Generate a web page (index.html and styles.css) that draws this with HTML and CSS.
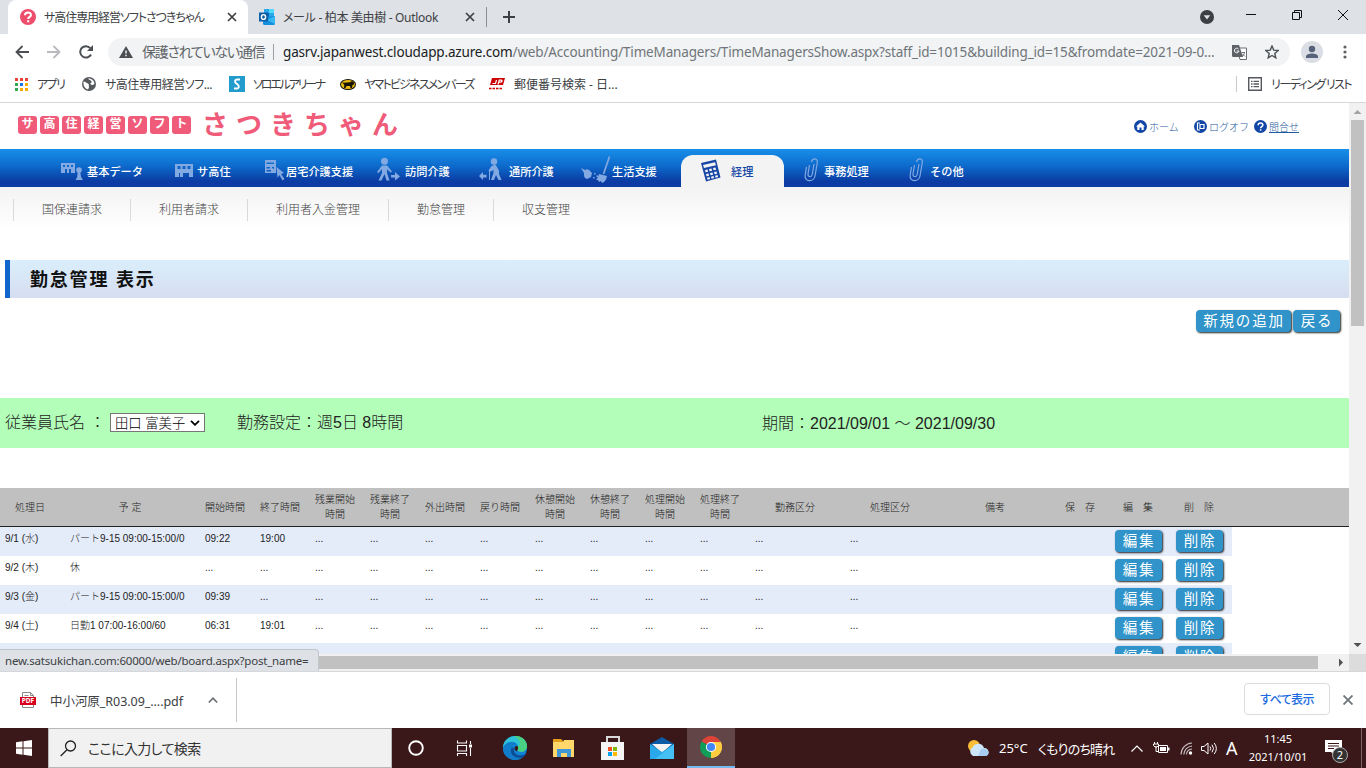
FILE: index.html
```html
<!DOCTYPE html>
<html lang="ja">

<head>
    <meta charset="UTF-8" />
    <meta name="viewport" content="width=device-width, initial-scale=1.0" />
    <title>サ高住専用経営ソフトさつきちゃん</title>
    <link rel="stylesheet" href="styles.css">
</head>

<body>

    <!-- Tabs -->
    <div class="tabstrip">
        <div class="tab active">
            <svg class="favicon" width="16" height="16" viewBox="0 0 16 16"><circle cx="8" cy="8" r="8" fill="#ee4d6c" /><path d="M5 6.2C5 2.6 11 2.6 11 6c0 2-2.8 1.9-2.8 4M8.200 11.300v2" fill="none" stroke="#fff" stroke-width="2" /></svg>
            <span class="tab-title title-main">サ高住専用経営ソフトさつきちゃん</span>
            <svg class="tab-close" width="10" height="10" viewBox="0 0 10 10"><path d="M1 1l8 8M9 1l-8 8" stroke="#3c4043" stroke-width="1.700" /></svg>
        </div>
        <div class="tab">
            <svg class="favicon" width="16" height="16" viewBox="0 0 16 16"><path d="M5 0h10v8H5z" fill="#28a8ea" /><path d="M10 0h5v4h-5z" fill="#50d9ff" /><path d="M5 4h5v4H5z" fill="#0364b8" /><path d="M4 8l12-1v7.500a1.500 1.500 0 0 1-1.500 1.500h-9A1.500 1.500 0 0 1 4 14.500z" fill="#1490df" /><path d="M16 7v8l-8-4z" fill="#35b8f1" /><path d="M0 3.500h9v9H0z" fill="#0f5ea8" /><ellipse cx="4.500" cy="8" rx="2.100" ry="2.400" fill="none" stroke="#fff" stroke-width="1.400" /></svg>
            <span class="tab-title title-mail">メール - 柏本 美由樹 - Outlook</span>
            <svg class="tab-close" width="10" height="10" viewBox="0 0 10 10"><path d="M1 1l8 8M9 1l-8 8" stroke="#3c4043" stroke-width="1.700" /></svg>
        </div>
        <svg class="new-tab" width="12" height="12" viewBox="0 0 12 12"><path d="M6 0v12M0 6h12" stroke="#3c4043" stroke-width="2" /></svg>
        <div class="window-buttons">
            <svg width="14" height="14" viewBox="0 0 14 14"><circle cx="7" cy="7" r="7" fill="#3c4043" /><path d="M3.700 5.200h6.600L7 9.600z" fill="#dee1e6" /></svg>
            <svg width="10" height="10" viewBox="0 0 10 10"><path d="M0 4.500h10" stroke="#111" /></svg>
            <svg width="10" height="10" viewBox="0 0 10 10"><path d="M.5 2.500h7v7h-7zM2.500 2.500v-2h7v7h-2" fill="none" stroke="#111" /></svg>
            <svg width="10" height="10" viewBox="0 0 10 10"><path d="M0 0l10 10M10 0L0 10" stroke="#111" /></svg>
        </div>
    </div>

    <!-- Address bar -->
    <div class="toolbar">
        <svg width="14" height="14" viewBox="0 0 14 14"><path d="M14 7H1.500M7.500 1l-6 6 6 6" fill="none" stroke="#4b4f54" stroke-width="1.800" /></svg>
        <svg width="14" height="14" viewBox="0 0 14 14"><path d="M0 7h12.500M6.500 1l6 6-6 6" fill="none" stroke="#b8babd" stroke-width="1.800" /></svg>
        <svg width="14" height="14" viewBox="0 0 14 14"><path d="M12 9.500A5.700 5.700 0 1 1 11.300 3.200" fill="none" stroke="#4b4f54" stroke-width="2" /><path d="M14 0v6H8z" fill="#4b4f54" /></svg>
        <div class="omnibox">
            <svg width="14" height="12" viewBox="0 0 14 12"><path d="M7 0l7 12H0z" fill="#4b4f54" /><path d="M7 4.500v3M7 8.700v1.500" stroke="#f1f3f4" stroke-width="1.500" /></svg>
            <span class="insecure">保護されていない通信</span>
            <span class="url"><b>gasrv.japanwest.cloudapp.azure.com</b>/web/Accounting/TimeManagers/TimeManagersShow.aspx?staff_id=1015&amp;building_id=15&amp;fromdate=2021-09-0...</span>
            <svg class="translate" width="15" height="15" viewBox="0 0 15 15"><path d="M5 3h9.500v11.500H8z" fill="#fff" stroke="#6a6e72" /><path d="M0 0h7l4 12H1.200A1.200 1.200 0 0 1 0 10.800z" fill="#5f6368" /><path d="M6.500 4A2.300 2.300 0 1 0 7 6H4.700" fill="none" stroke="#fff" stroke-width="1" /><path d="M9.500 7.500H13M12.500 7.500c-.3 2-1.300 3-2.500 4M10.500 9l2.500 2.500" fill="none" stroke="#5f6368" stroke-width=".9" /></svg>
            <svg class="star" width="14" height="14" viewBox="0 0 14 14"><path d="M7 1l1.700 4.100 4.500.4-3.400 2.900 1 4.400L7 10.500l-3.800 2.300 1-4.400L.8 5.500l4.500-.4z" fill="none" stroke="#4b4f54" stroke-width="1.400" /></svg>
        </div>
        <svg class="avatar" width="22" height="22" viewBox="0 0 22 22"><circle cx="11" cy="11" r="11" fill="#dadee4" /><circle cx="11" cy="8" r="3.200" fill="#56617a" /><path d="M5 17v-1.500c0-4 12-4 12 0V17z" fill="#56617a" /></svg>
        <svg class="menu-dots" width="4" height="14" viewBox="0 0 4 14"><g fill="#5f6368"><circle cx="2" cy="2" r="1.600" /><circle cx="2" cy="7" r="1.600" /><circle cx="2" cy="12" r="1.600" /></g></svg>
    </div>

    <!-- Bookmarks -->
    <div class="bookmarks">
        <a class="bm bm-apps"><svg width="13" height="13" viewBox="0 0 13 13"><path d="M0 0h3v3H0zM5 0h3v3H5zM10 0h3v3h-3z" fill="#ea4335" /><path d="M0 5h3v3H0z" fill="#34a853" /><path d="M5 5h3v3H5z" fill="#1a73e8" /><path d="M10 5h3v3h-3zM5 10h3v3H5zM10 10h3v3h-3z" fill="#f9ab00" /><path d="M0 10h3v3H0z" fill="#34a853" /></svg>アプリ</a>
        <a class="bm bm-satsuki"><svg width="14" height="14" viewBox="0 0 14 14"><circle cx="7" cy="7" r="7" fill="#55595e" /><path d="M1.500 4.500c2 0 2.500 1.500 4.500 2 1.500.5.500 2.500 1 4l-1 2C3 11.500 1 9 1.500 4.500zM6 1.500c1 2 3 1 3.500 3S7 6 9 7.500s2.500-.5 3.500-.5C12.500 4 10 1.300 6 1.500z" fill="#fff" /></svg>サ高住専用経営ソフ...</a>
        <a class="bm bm-soloel"><svg width="16" height="16" viewBox="0 0 16 16"><path d="M0 0h16v16H0z" fill="#229ccc" /><path d="M11 3.500H8.300C5.500 3.500 5.500 6 7 7.200l2 1.600c1.500 1.500.8 3.700-1.200 3.700H5" fill="none" stroke="#fff" stroke-width="1.900" /></svg>ソロエルアリーナ</a>
        <a class="bm bm-yamato"><svg width="16" height="11" viewBox="0 0 16 11"><ellipse cx="8" cy="5.500" rx="8" ry="5.500" fill="#151308" /><ellipse cx="8" cy="5.500" rx="7" ry="4.500" fill="#e8b914" /><path d="M2 3l2 .8 6-.6L12 2l2 1.500v2L12.500 6 12 9h-1.500L10 7H6.500L5.500 9H4l.3-3z" fill="#151308" /></svg>ヤマトビジネスメンバーズ</a>
        <a class="bm bm-post"><svg width="16" height="12" viewBox="0 0 16 12"><path d="M3 0h13l-2 7H1z" fill="#c00" /><path d="M7.500 2L6.500 5.500H3.500M9 6.500l1.300-4.300h2.200c1 0 .6 2-.6 2H9.700" fill="none" stroke="#fff" stroke-width="1.200" /><path d="M0 10.500h14" stroke="#c00" stroke-width="1.500" stroke-dasharray="2.500 1" /></svg>郵便番号検索 - 日...</a>
        <a class="bm bm-reading"><svg width="14" height="14" viewBox="0 0 14 14"><path d="M.7.7h12.600v12.600H.7z" fill="none" stroke="#55595e" stroke-width="1.400" /><path d="M3 4.300h1.500M3 7h1.500M3 9.700h1.500M5.500 4.300H11M5.500 7H11M5.500 9.700H11" stroke="#55595e" stroke-width="1.300" /></svg>リーディング リスト</a>
    </div>

    <div class="viewport">
        <div class="page">
            <!-- Site header -->
            <div class="header">
                <div class="badges">
                    <span>サ</span><span>高</span><span>住</span><span>経</span><span>営</span><span>ソ</span><span>フ</span><span>ト</span>
                </div>
                <div class="logo">さつきちゃん</div>
                <div class="header-links">
                    <a class="link-home"><svg width="13" height="13" viewBox="0 0 13 13"><circle cx="6.500" cy="6.500" r="6.500" fill="#1146a6" /><path d="M6.500 2.500L2 6.500h1.300V10h2.200V7.500h2V10h2.200V6.500H11z" fill="#fff" /></svg>ホーム</a>
                    <a class="link-logoff"><svg width="13" height="13" viewBox="0 0 13 13"><circle cx="6.500" cy="6.500" r="6.500" fill="#1146a6" /><path d="M6 3H3.500v7H6M6 4.500h4v4H6z" fill="none" stroke="#fff" stroke-width="1.200" /></svg>ログオフ</a>
                    <a class="link-contact"><svg width="13" height="13" viewBox="0 0 13 13"><circle cx="6.500" cy="6.500" r="6.500" fill="#1146a6" /><path d="M4.200 5.200c0-2.800 4.600-2.800 4.600 0 0 1.500-2.200 1.300-2.200 3M6.600 9.200v1.500" fill="none" stroke="#fff" stroke-width="1.500" /></svg><u>問合せ</u></a>
                </div>
            </div>

            <!-- Main menu -->
            <div class="nav">
                <a><svg width="26" height="22" viewBox="0 0 26 22"><path fill-rule="evenodd" d="M0 3h14v10h-4v-4H8v4H6v-4H4v4H0zM2 5v2h2V5zM6 5v2h2V5zM10 5v2h2V5z" /><circle cx="18" cy="10" r="2.800" /><path d="M16.700 12h2.600l.7 5 2 3h-7.500l1.700-3z" /></svg>基本データ</a>
                <a><svg width="22" height="22" viewBox="0 0 22 22"><path fill-rule="evenodd" d="M0 4h18v13h-4v-4H8v4H4v0H0zM2.500 6v3h3V6zM7.500 6v3h3V6zM12.500 6v3h3V6zM4 13v4h1v-4z" /></svg>サ高住</a>
                <a><svg width="21" height="22" viewBox="0 0 21 22"><path fill-rule="evenodd" d="M0 0h11v13H0zM1.500 2.500V4H9V2.500zM1.500 7v1.500H5V7zM7 7v1l2 1V7zM1.500 10v1.500H6V10z" /><path d="M11.500 7l7.500 6-3 1 3.500 5-2 1.500-3-5.500-2 2.500z" /></svg>居宅介護支援</a>
                <a><svg class="tall" width="28" height="26" viewBox="0 0 28 26"><circle cx="7.500" cy="4.300" r="3.500" /><path d="M5 8.500h5l5 6-1.500 1L10 12v4l2.500 7.500h-3L7.500 17l-3 6.500h-3L5 16v-4l-3.500 4L0 15z" /><path d="M14 18h4v-3l5 4.500-5 4v-3h-4z" /></svg>訪問介護</a>
                <a><svg class="tall" width="30" height="26" viewBox="0 0 30 26"><path d="M0 19l4-4v2.700h3.500v2.800H4V23z" /><circle cx="15" cy="4.500" r="3.200" /><path d="M12.500 9l4-1.500 3.500 6V17l2.500 6h-3L17 18l-2 5h-3l2.500-7v-3l-4 2-1-1.500z" /><path d="M10.500 12v11" stroke="#83a9e2" stroke-width="1" /></svg>通所介護</a>
                <a><svg class="tall" width="31" height="29" viewBox="0 0 31 29"><path d="M0 12l4 2c3-2 4 0 7 3l-1 4-4 2c-3-1-3-3-3-6zM13 17h1.500v1.500H13zM12 21h1.500v1.500H12zM15.500 19.500H17V21h-1.500z" /><path d="M28.500.5L22.500 18" stroke="#83a9e2" stroke-width="1.700" /><path d="M18 18l8 2c-1 4-2 6-5 7l-1-2-2 1-1-2-2 0 2-3z" /></svg>生活支援</a>
                <a class="current"><svg width="30" height="24" viewBox="0 0 30 24"><path fill-rule="evenodd" d="M0 4l15-3.500 4.500 18L5 22.500zM2 6l1 3 12-2.800-1-3zM4 11l.6 2.300 2.500-.6-.6-2.300zM8 10l.6 2.300 2.500-.6-.6-2.300zM12 9l.6 2.300 2.500-.6-.6-2.300zM5 15l.6 2.300 2.500-.6-.6-2.300zM9 14l.6 2.300 2.500-.6-.6-2.300zM13 13l.6 2.300 2.500-.6-.6-2.300zM6 18.700l.6 2 2.500-.6-.6-2zM10 17.700l.6 2 2.500-.6-.6-2zM14 16.700l.6 2 2.500-.6-.6-2z" /></svg>経理</a>
                <a><svg class="tall" width="20" height="26" viewBox="0 0 20 26"><path class="clip" d="M5.500 8L4 17c-.4 3 3.600 3.500 4.200.5L10 7M7.500 5C8.500.5 14 1 13.300 5.500L11 19c-1 6.500-11 6-9.800-1L2.500 10" /></svg>事務処理</a>
                <a><svg class="tall" width="21" height="26" viewBox="0 0 21 26"><path class="clip" d="M5.500 8L4 17c-.4 3 3.600 3.500 4.200.5L10 7M7.500 5C8.500.5 14 1 13.300 5.500L11 19c-1 6.500-11 6-9.800-1L2.500 10" /></svg>その他</a>
            </div>
            <div class="subnav">
                <a>国保連請求</a><a>利用者請求</a><a>利用者入金管理</a><a>勤怠管理</a><a>収支管理</a>
            </div>

            <h1>勤怠管理 表示</h1>

            <div class="actions">
                <button class="btn">新規の追加</button>
                <button class="btn">戻る</button>
            </div>

            <div class="filter">
                <span class="filter-label">従業員氏名 ：</span>
                <div class="select">田口 富美子<svg width="10" height="6" viewBox="0 0 10 6"><path d="M1 .8l4 4 4-4" fill="none" stroke="#000" stroke-width="1.800" /></svg></div>
                <span class="filter-setting">勤務設定：週5日 8時間</span>
                <span class="filter-period">期間：2021/09/01 ～ 2021/09/30</span>
            </div>

            <table class="time-table">
                <colgroup>
                    <col class="c-date"><col class="c-plan"><col span="10" class="c-time"><col class="c-kubun"><col class="c-shori"><col class="c-biko"><col class="c-save"><col class="c-edit"><col class="c-delete"><col>
                </colgroup>
                <thead>
                    <tr>
                        <th>処理日</th><th>予 定</th><th class="t">開始時間</th><th class="t">終了時間</th><th class="t">残業開始<br>時間</th><th class="t">残業終了<br>時間</th><th class="t">外出時間</th><th class="t">戻り時間</th><th class="t">休憩開始<br>時間</th><th class="t">休憩終了<br>時間</th><th class="t">処理開始<br>時間</th><th class="t">処理終了<br>時間</th><th>勤務区分</th><th>処理区分</th><th>備考</th><th>保　存</th><th>編　集</th><th>削　除</th><th></th>
                    </tr>
                </thead>
                <tbody>
                    <tr>
                        <td>9/1 (水)</td><td>パート9-15 09:00-15:00/0</td><td>09:22</td><td>19:00</td><td>...</td><td>...</td><td>...</td><td>...</td><td>...</td><td>...</td><td>...</td><td>...</td><td>...</td><td>...</td><td></td><td></td>
                        <td><button class="btn">編集</button></td><td><button class="btn">削除</button></td><td></td>
                    </tr>
                    <tr>
                        <td>9/2 (木)</td><td>休</td><td>...</td><td>...</td><td>...</td><td>...</td><td>...</td><td>...</td><td>...</td><td>...</td><td>...</td><td>...</td><td>...</td><td>...</td><td></td><td></td>
                        <td><button class="btn">編集</button></td><td><button class="btn">削除</button></td><td></td>
                    </tr>
                    <tr>
                        <td>9/3 (金)</td><td>パート9-15 09:00-15:00/0</td><td>09:39</td><td>...</td><td>...</td><td>...</td><td>...</td><td>...</td><td>...</td><td>...</td><td>...</td><td>...</td><td>...</td><td>...</td><td></td><td></td>
                        <td><button class="btn">編集</button></td><td><button class="btn">削除</button></td><td></td>
                    </tr>
                    <tr>
                        <td>9/4 (土)</td><td>日勤1 07:00-16:00/60</td><td>06:31</td><td>19:01</td><td>...</td><td>...</td><td>...</td><td>...</td><td>...</td><td>...</td><td>...</td><td>...</td><td>...</td><td>...</td><td></td><td></td>
                        <td><button class="btn">編集</button></td><td><button class="btn">削除</button></td><td></td>
                    </tr>
                    <tr>
                        <td></td><td></td><td></td><td></td><td></td><td></td><td></td><td></td><td></td><td></td><td></td><td></td><td></td><td></td><td></td><td></td>
                        <td><button class="btn">編集</button></td><td><button class="btn">削除</button></td><td></td>
                    </tr>
                </tbody>
            </table>
        </div>

        <div class="scroll-y">
            <svg width="17" height="17" viewBox="0 0 17 17"><path d="M4.500 11h8L8.500 7z" fill="#a3a3a3" /></svg>
            <div class="thumb"></div>
            <svg width="17" height="17" viewBox="0 0 17 17"><path d="M4.500 6h8l-4 4z" fill="#505050" /></svg>
        </div>
        <div class="scroll-x">
            <div class="thumb"></div>
            <svg width="17" height="17" viewBox="0 0 17 17"><path d="M7 4.500v8l4-4z" fill="#505050" /></svg>
        </div>
        <div class="corner"></div>
        <div class="status">new.satsukichan.com:60000/web/board.aspx?post_name=</div>
    </div>

    <!-- Downloads -->
    <div class="downloads">
        <div class="download">
            <svg width="16" height="16" viewBox="0 0 16 16"><path d="M2.500 15.500V.5h8l3 3v12z" fill="#fff" stroke="#8a8a8a" /><path d="M10.500.5v3h3M4.500 3.500h4" fill="none" stroke="#8a8a8a" /><path d="M0 5h16v8H0z" fill="#d9001b" /><text x="8" y="11.300" text-anchor="middle" class="pdf-text">PDF</text></svg>
            <span>中小河原_R03.09_....pdf</span>
            <svg class="chev" width="10" height="6" viewBox="0 0 10 6"><path d="M.8 5.500L5 1.200l4.200 4.300" fill="none" stroke="#6b6f73" stroke-width="1.600" /></svg>
        </div>
        <button class="show-all">すべて表示</button>
        <svg width="10" height="10" viewBox="0 0 10 10"><path d="M.5.5l9 9M9.500.5l-9 9" stroke="#73777b" stroke-width="1.900" /></svg>
    </div>

    <!-- Taskbar -->
    <div class="taskbar">
        <div class="start"><svg width="16" height="16" viewBox="0 0 16 16"><path d="M0 2.200L6.500 1.300V7.500H0zM7.500 1.200L16 0v7.500H7.500zM0 8.500h6.500v6.200L0 13.800zM7.500 8.500H16V16l-8.500-1.200z" fill="#fff" /></svg></div>
        <div class="search">
            <svg width="17" height="17" viewBox="0 0 17 17"><circle cx="10.500" cy="6" r="5" fill="none" stroke="#222" stroke-width="1.300" /><path d="M7 9.700L.7 16" stroke="#222" stroke-width="1.300" /></svg>
            <span>ここに入力して検索</span>
        </div>
        <div class="task"><svg width="16" height="16" viewBox="0 0 16 16"><circle cx="8" cy="8" r="6.800" fill="none" stroke="#fff" stroke-width="1.900" /></svg></div>
        <div class="task"><svg width="17" height="17" viewBox="0 0 17 17"><path d="M1.500.5v2.500h9V.5M1.500 16v-2.500h9V16M1.500 5.500h9v5.500h-9zM14.500 1v3M14.500 8v8" fill="none" stroke="#fff" stroke-width="1.100" /><path d="M13 4.500h3v3h-3z" fill="#fff" /></svg></div>
        <div class="task wide"><svg width="24" height="24" viewBox="0 0 24 24"><circle cx="12" cy="12" r="12" fill="#1181d4" /><path d="M0 12C0-3 23-4 24 10c0 5-5 7-9 5-2-1 1-2 0-5C13 4 3 4 0 12z" fill="#2fc3d8" /><path d="M11 0c8-.5 13 5 13 10 0 5-5 7-9 5-1.500-1 .5-2 0-5 3-1 3-6-4-10z" fill="#50d36b" opacity=".8" /><path d="M0 12c2-6 11-7 14-3-3-1-6 1-6 5s4 9 12 7c-3 3-9 4-12 2C3 21 0 18 0 12z" fill="#117cc9" /><path d="M9 11c-3 5 0 11 9 11 2 0 4-2 5-4-6 3-13 1-12-5z" fill="#0b4c94" /><path d="M11.500 12c0-2 3-3 3.500-1 .5 3-1.500 3.300-.5 4.300-2 0-3-1.500-3-3.300z" fill="#3a1719" /></svg></div>
        <div class="task wide"><svg width="22" height="19" viewBox="0 0 22 19"><path d="M0 0h8l2 2v4H0z" fill="#e5a019" /><path d="M0 3h10l1-2h10v17H0z" fill="#ffd76b" /><path d="M4 18v-8h14v8h-4v-4H8v4z" fill="#3f97d8" /></svg></div>
        <div class="task wide"><svg width="24" height="25" viewBox="0 0 24 25"><path d="M6 7V1h12v6" fill="none" stroke="#d8d8d8" stroke-width="2" /><path d="M0 6h23v18H0z" fill="#f5f5f5" /><path d="M7 11h4v4H7z" fill="#f25022" /><path d="M12 11h4v4h-4z" fill="#7fba00" /><path d="M7 16h4v4H7z" fill="#00a4ef" /><path d="M12 16h4v4h-4z" fill="#ffb900" /></svg></div>
        <div class="task wide"><svg width="24" height="22" viewBox="0 0 24 22"><path d="M0 7l12-7 12 7v4H0z" fill="#0e5ba5" /><path d="M2 7h20l-10 9z" fill="#f4f4f4" /><path d="M0 7l12 8L24 7v15H0z" fill="#29a8ea" /><path d="M24 7L5 22h19z" fill="#45c0f5" /></svg></div>
        <div class="task wide open"><svg width="22" height="22" viewBox="0 0 22 22"><path d="M11 11L1.500 5.500A11 11 0 0 1 20.500 5.500z" fill="#db4437" /><path d="M11 11l9.500-5.500A11 11 0 0 1 11 22z" fill="#ffcd40" /><path d="M11 11v11A11 11 0 0 1 1.500 5.500z" fill="#0f9d58" /><path d="M11 6h9.700a11 11 0 0 1-9.700 16l4.500-8z" fill="#ffcd40" /><circle cx="11" cy="11" r="5.100" fill="#fff" /><circle cx="11" cy="11" r="4.100" fill="#4285f4" /></svg></div>
        <div class="tray">
            <svg class="weather" width="21" height="16" viewBox="0 0 21 16"><circle cx="6" cy="6" r="6" fill="#f9bd38" /><path d="M5 16a5 5 0 0 1 0-9c2-5 10-4 11 1 6 0 6 8 1 8z" fill="#cfe5fa" /><path d="M10 16l3-7c8-3 10 7 4 7z" fill="#a9cdf2" /></svg>
            <span class="temp">25°C</span>
            <span class="forecast">くもりのち晴れ</span>
            <svg class="up" width="12" height="7" viewBox="0 0 12 7"><path d="M.5 6.500L6 1l5.500 5.500" fill="none" stroke="#fff" stroke-width="1.200" /></svg>
            <svg class="battery" width="17" height="12" viewBox="0 0 17 12"><path d="M5.500 3.500h9v7h-9zM3 4v5.500h2M1.500 0v2M4.500 0v2M.5 2h5v1.500L4 5H2L.5 3.500z" fill="none" stroke="#fff" /><path d="M7 5h6v4H7zM15 5.500h1.500v3H15z" fill="#fff" /></svg>
            <svg class="wifi" width="13" height="13" viewBox="0 0 13 13"><path d="M1 12.500A11.500 11.500 0 0 1 12 1M3.800 12.500A9 9 0 0 1 12 4M6.500 12.500A6 6 0 0 1 12 7" fill="none" stroke="#c9bfc0" stroke-width="1.100" /><circle cx="10.500" cy="11" r="1.700" fill="#fff" /></svg>
            <svg class="volume" width="17" height="13" viewBox="0 0 17 13"><path d="M.5 4.500H3l4-3.500v11L3 8.500H.5zM9 4.500q1.500 2 0 4M11 2.700q3 3.800 0 7.600M13.200 1q4.300 5.500 0 11" fill="none" stroke="#fff" /></svg>
            <span class="ime">A</span>
            <div class="clock">11:45<br>2021/10/01</div>
            <div class="notice"><svg width="17" height="16" viewBox="0 0 17 16"><path d="M0 0h17v12h-7v4l-4-4H0z" fill="#fff" /><path d="M3 3.500h11M3 6h11M3 8.500h6" stroke="#3a1719" /></svg><span>2</span></div>
        </div>
        <div class="show-desktop"></div>
    </div>

</body>

</html>
```
FILE: styles.css
```css
* {
    box-sizing: border-box;
}

body {
    margin: 0;
    width: 1366px;
    height: 768px;
    overflow: hidden;
    display: flex;
    flex-direction: column;
    background-color: #fff;
    font-family: "Noto Sans", "Noto Sans CJK JP", sans-serif;
    font-size: 12px;
    color: #3c4043;
}

svg {
    flex: none;
    display: block;
}

span,
a {
    white-space: nowrap;
}

/* tabs */
.tabstrip {
    height: 34px;
    flex: none;
    display: flex;
    background-color: #dee1e6;
    padding-left: 8px;
}

.tab {
    width: 239px;
    display: flex;
    align-items: center;
    padding: 0 11px;
    border-right: 1px solid #8b8f94;
    height: 20px;
    margin-top: 7px;
}

.tab.active {
    width: 240px;
    height: 34px;
    margin-top: 0;
    padding-left: 12px;
    border: none;
    border-radius: 8px 8px 0 0;
    background-color: #fff;
}

.favicon {
    margin-right: 8px;
}

.tab-title {
    font-feature-settings: "palt";
}

.title-main {
    letter-spacing: -1.05px;
}

.title-mail {
    letter-spacing: -0.32px;
}

.tab-close {
    margin-left: auto;
}

.new-tab {
    margin: 11px 0 0 16px;
}

.window-buttons {
    display: flex;
    align-items: center;
    gap: 36px;
    height: 30px;
    margin-left: auto;
    padding-right: 18px;
}

.window-buttons svg:first-child {
    margin: 4px -4px 0 0;
}

/* address bar */
.toolbar {
    height: 35px;
    flex: none;
    display: flex;
    align-items: center;
    padding: 1px 0 0 15px;
}

.toolbar > svg {
    margin-right: 18px;
}

.omnibox {
    width: 1182px;
    height: 28px;
    margin-left: -3px;
    border-radius: 14px;
    background-color: #f1f3f4;
    display: flex;
    align-items: center;
    padding-left: 11px;
    font-size: 14px;
}

.insecure {
    margin-left: 9px;
    width: 132px;
    border-right: 1px solid #9aa0a6;
    line-height: 16px;
    color: #5f6368;
    font-feature-settings: "palt";
    letter-spacing: -1.3px;
}

.url {
    margin-left: 9px;
    width: 938px;
    color: #70757a;
    font-size: 13.5px;
    letter-spacing: -0.16px;
}

.url b {
    font-weight: normal;
    color: #202124;
}

.translate {
    margin-left: 11px;
}

.star {
    margin-left: 18px;
}

.toolbar .avatar {
    margin: 0 0 0 11px;
}

.toolbar .menu-dots {
    margin: 0 0 0 20px;
}

/* bookmarks */
.bookmarks {
    height: 34px;
    flex: none;
    display: flex;
    align-items: center;
    padding: 0 15px;
    padding-bottom: 3px;
    border-bottom: 1px solid #d5d7da;
    font-feature-settings: "palt";
}

.bm {
    display: flex;
    align-items: center;
    gap: 9px;
    letter-spacing: -0.5px;
}

.bm-apps {
    width: 67px;
    letter-spacing: -1.6px;
}

.bm-satsuki {
    width: 147px;
}

.bm-soloel {
    width: 111px;
    gap: 8px;
    letter-spacing: -2.2px;
}

.bm-yamato {
    width: 149px;
    gap: 8px;
    letter-spacing: -1.8px;
}

.bm-post {
    letter-spacing: 0;
}

.bm-reading {
    margin-left: auto;
    height: 16px;
    border-left: 1px solid #c8cacd;
    padding-left: 11px;
    letter-spacing: -1.6px;
}

/* page area and its scrollbars */
.viewport {
    position: relative;
    flex: none;
    height: 569px;
    display: grid;
    grid-template-columns: 1349px 17px;
    grid-template-rows: 551px 17px;
    border-bottom: 1px solid #d5d7da;
}

.page {
    overflow: hidden;
    font-family: "Liberation Sans", "Noto Sans CJK JP", sans-serif;
    font-weight: 300;
    color: #222;
}

.header {
    height: 46px;
    display: flex;
    align-items: center;
    padding-left: 18px;
    padding-bottom: 2px;
}

.badges {
    display: flex;
    gap: 3px;
}

.badges span {
    width: 19px;
    height: 18px;
    border-radius: 3px;
    background-color: #ef5b78;
    color: #fff;
    font-size: 12px;
    font-weight: bold;
    line-height: 17px;
    text-align: center;
}

.logo {
    margin-left: 11px;
    font-size: 26px;
    font-weight: bold;
    letter-spacing: 8px;
    line-height: 30px;
    color: #ef5b78;
}

.header-links {
    margin-left: auto;
    display: flex;
    padding-top: 3px;
    font-size: 10px;
    color: #1f5a9c;
}

.header-links a {
    display: flex;
    align-items: center;
    gap: 2px;
}

.link-home,
.link-logoff {
    width: 60px;
}

.header-links .link-contact {
    width: 95px;
}

/* main menu */
.nav {
    height: 38px;
    padding-left: 61px;
    display: grid;
    grid-template-columns: 114px 90px 112px 102px 102px 100px 123px 105px 100px;
    background: linear-gradient(#188fea, #0d6acb 45%, #0b3ba3 85%);
    color: #fff;
    font-size: 11.2px;
    font-weight: 500;
}

.nav a {
    display: flex;
    align-items: center;
    padding-top: 5px;
}

.nav svg {
    fill: #83a9e2;
}

.nav .tall {
    margin-top: -1px;
}

.nav .clip {
    fill: none;
    stroke: #83a9e2;
    stroke-width: 1.2;
}

.nav .current {
    width: 103px;
    margin-top: 6px;
    padding: 0 0 1px 20px;
    border-radius: 12px 12px 0 0;
    background-color: #f3f3f3;
    color: #1747a5;
}

.nav .current svg {
    fill: #1747a5;
}

.subnav {
    height: 73px;
    display: flex;
    padding: 12px 0 0 13px;
    background: linear-gradient(#f3f3f3, #fff 42px);
}

.subnav a {
    height: 22px;
    border-left: 1px solid #d9d9d9;
    padding: 0 28px;
    line-height: 23px;
    color: #444;
}

h1 {
    height: 38px;
    margin: 0 0 0 5px;
    border-left: 5px solid #1166cc;
    padding-left: 20px;
    background: linear-gradient(#daeefb, #d6ddf0);
    color: #111;
    font-size: 18px;
    line-height: 40px;
    letter-spacing: 1.8px;
}

.btn {
    width: 47px;
    height: 22px;
    padding: 0 0 0 1px;
    border: none;
    border-radius: 4px;
    background-color: #3093c9;
    box-shadow: 1px 1px 2px #222;
    color: #fff;
    font-family: inherit;
    font-size: 14.5px;
    letter-spacing: 1.8px;
    line-height: 21px;
    display: block;
}

.actions {
    height: 100px;
    display: flex;
    justify-content: flex-end;
    gap: 2px;
    padding: 12px 9px 0 0;
}

.actions .btn:first-child {
    width: 95px;
}

.filter {
    height: 50px;
    display: flex;
    align-items: center;
    background-color: #b3ffb9;
    padding: 0 0 2px 5px;
    font-size: 16px;
}

.filter-label {
    width: 105px;
    margin-top: -3px;
}

.select {
    width: 95px;
    height: 19px;
    margin-top: 1px;
    border: 1px solid #767676;
    background-color: #fff;
    padding: 0 4px;
    display: flex;
    align-items: center;
    justify-content: space-between;
    white-space: nowrap;
    color: #000;
    font-size: 13.3px;
}

.filter-setting {
    width: 525px;
    margin: -3px 0 0 32px;
}

.filter-period {
    margin-top: -1px;
}

/* timesheet */
.time-table {
    width: 1349px;
    margin-top: 40px;
    table-layout: fixed;
    border-collapse: separate;
    border-spacing: 0;
    font-size: 10px;
}

.c-date {
    width: 60px;
}

.c-plan {
    width: 140px;
}

.c-time {
    width: 55px;
}

.c-kubun {
    width: 90px;
}

.c-shori {
    width: 100px;
}

.c-biko {
    width: 110px;
}

.c-save {
    width: 60px;
}

.c-edit {
    width: 56px;
}

.c-delete {
    width: 66px;
}

.time-table th {
    height: 39px;
    padding: 0;
    background-color: #c0c0c0;
    border-bottom: 1px solid #222;
    font-weight: 300;
    line-height: 15px;
    color: #222;
    white-space: nowrap;
}

.time-table .t {
    padding-right: 5px;
}

.time-table td {
    height: 29px;
    padding: 4px 0 0 5px;
    vertical-align: top;
    line-height: 15px;
    white-space: nowrap;
}

.time-table td:nth-child(2),
.time-table td:nth-child(14),
.time-table td:nth-child(18) {
    padding-left: 10px;
}

.time-table .btn {
    margin-top: -1px;
}

.time-table tbody tr:nth-child(odd) td {
    background-color: #e4ebf9;
}

.time-table tbody tr td:last-child {
    background-color: #fff;
}

.scroll-y {
    background-color: #f1f1f1;
    display: flex;
    flex-direction: column;
}

.scroll-y .thumb {
    width: 13px;
    height: 206px;
    margin: 0 2px auto;
    background-color: #c1c1c1;
}

.scroll-x {
    background-color: #f1f1f1;
    display: flex;
}

.scroll-x .thumb {
    width: 1318px;
    height: 13px;
    margin: 2px 14px 0 0;
    background-color: #c1c1c1;
}

.corner {
    background-color: #dcdcdc;
}

.status {
    position: absolute;
    left: 0;
    bottom: 0;
    width: 319px;
    height: 22px;
    border: 1px solid #c3c6ca;
    border-width: 1px 1px 0 0;
    border-radius: 0 4px 0 0;
    background-color: #dee1e6;
    padding-left: 5px;
    line-height: 22px;
    font-size: 11.5px;
    letter-spacing: -0.2px;
    white-space: nowrap;
}

/* downloads */
.downloads {
    height: 56px;
    flex: none;
    display: flex;
    align-items: center;
    padding: 0 13px 0 20px;
}

.download {
    width: 217px;
    height: 44px;
    display: flex;
    align-items: center;
    border-right: 1px solid #c8c8c8;
}

.download span {
    width: 152px;
    margin-left: 14px;
    font-size: 12.5px;
    letter-spacing: -0.05px;
}

.chev {
    margin-left: 6px;
}

.pdf-text {
    fill: #fff;
    font-size: 6.5px;
    font-weight: bold;
}

.show-all {
    width: 86px;
    height: 32px;
    margin: 0 13px 2px auto;
    border: 1px solid #dadce0;
    border-radius: 4px;
    background-color: #fff;
    color: #1a6be0;
    font-family: inherit;
    font-size: 12px;
    font-weight: 500;
    font-feature-settings: "palt";
    letter-spacing: -0.6px;
}

/* taskbar */
.taskbar {
    height: 40px;
    flex: none;
    display: flex;
    background-color: #3a1719;
    color: #fff;
}

.start,
.task {
    width: 48px;
    display: flex;
    align-items: center;
    justify-content: center;
}

.search {
    width: 344px;
    border: 1px solid #b9b9b9;
    background-color: #f1f1f1;
    color: #333;
    display: flex;
    align-items: center;
    padding-left: 11px;
    font-size: 14px;
    font-feature-settings: "palt";
}

.search span {
    margin-left: 11px;
    letter-spacing: -0.6px;
}

.task.wide {
    width: 49px;
}

.task:nth-child(5) {
    margin-left: 2px;
}

.task.open {
    width: 48px;
    margin-left: 1px;
    background-color: #614547;
    border-bottom: 2px solid #76b9ed;
}

.tray {
    flex: 1;
    display: flex;
    align-items: center;
    padding-left: 233px;
    font-size: 14px;
}

.temp {
    width: 39px;
    margin-left: 10px;
    font-size: 13px;
}

.forecast {
    width: 85px;
    font-size: 13px;
    font-feature-settings: "palt";
    letter-spacing: -0.8px;
}

.up {
    margin-left: 8px;
}

.battery {
    margin-left: 10px;
}

.wifi {
    margin-left: 10px;
}

.volume {
    margin-left: 8px;
}

.ime {
    width: 22px;
    margin-left: 8px;
    font-size: 18px;
}

.clock {
    width: 60px;
    text-align: center;
    font-size: 11px;
    line-height: 18px;
}

.notice {
    position: relative;
    margin-left: 17px;
}

.notice span {
    position: absolute;
    left: 7px;
    top: 7px;
    width: 16px;
    height: 16px;
    border: 1px solid #aaa;
    border-radius: 50%;
    background-color: #333;
    font-size: 11px;
    line-height: 14px;
    text-align: center;
}

.show-desktop {
    width: 5px;
    border-left: 1px solid #7a6465;
}
```
